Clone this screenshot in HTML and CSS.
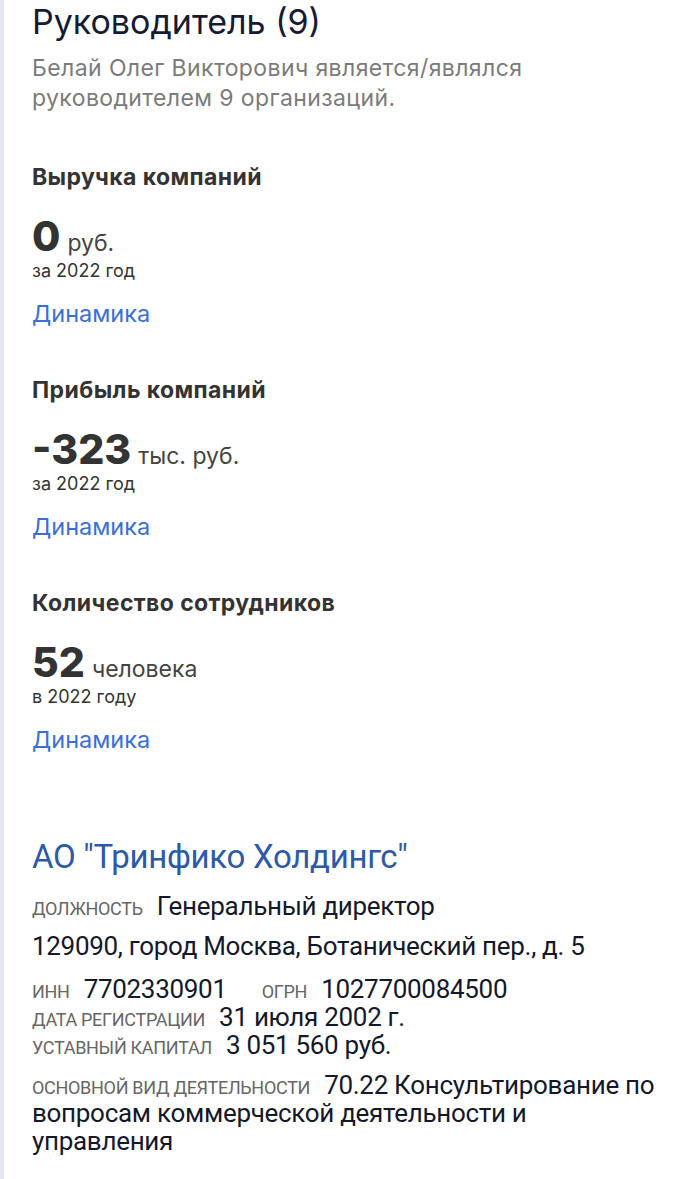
FILE: index.html
```html
<!DOCTYPE html>
<html lang="ru">
<head>
<meta charset="utf-8">
<link rel="stylesheet" href="styles.css">
</head>
<body>
<div class="page">
  <h1 class="title">Руководитель (9)</h1>
  <p class="lead">Белай Олег Викторович является/являлся руководителем 9 организаций.</p>

  <section class="stat">
    <h2 class="stat-title">Выручка компаний</h2>
    <div class="stat-value"><span class="num">0</span><span class="unit">руб.</span></div>
    <div class="stat-period">за 2022 год</div>
    <a class="link" href="#">Динамика</a>
  </section>

  <section class="stat">
    <h2 class="stat-title">Прибыль компаний</h2>
    <div class="stat-value"><span class="num">-323</span><span class="unit">тыс. руб.</span></div>
    <div class="stat-period">за 2022 год</div>
    <a class="link" href="#">Динамика</a>
  </section>

  <section class="stat">
    <h2 class="stat-title">Количество сотрудников</h2>
    <div class="stat-value"><span class="num">52</span><span class="unit">человека</span></div>
    <div class="stat-period">в 2022 году</div>
    <a class="link" href="#">Динамика</a>
  </section>

  <section class="org">
    <a class="org-name" href="#">АО "Тринфико Холдингс"</a>
    <div class="row row-pos"><span class="label">должность</span><span class="val">Генеральный директор</span></div>
    <div class="row row-addr"><span class="val">129090, город Москва, Ботанический пер., д. 5</span></div>
    <div class="row-group">
      <div class="row"><span class="label">инн</span><span class="val">7702330901</span><span class="label gap">огрн</span><span class="val">1027700084500</span></div>
      <div class="row"><span class="label">дата регистрации</span><span class="val">31 июля 2002 г.</span></div>
      <div class="row"><span class="label">уставный капитал</span><span class="val">3 051 560 руб.</span></div>
    </div>
    <div class="row row-act"><span class="label">основной вид деятельности</span><span class="val">70.22 Консультирование по вопросам коммерческой деятельности и управления</span></div>
  </section>
</div>
</body>
</html>
```

FILE: styles.css
```css
html, body {
  margin: 0;
  padding: 0;
  background: #fff;
}
body {
  font-family: Inter, "Noto Sans", sans-serif;
}
.page {
  border-left: 4px solid #e3e6ea;
  padding: 2px 40px 0 28px;
  min-height: 1179px;
  box-sizing: border-box;
}
.title {
  margin: 0;
  font-size: 34px;
  line-height: 40px;
  font-weight: 400;
  color: #161a33;
}
.lead {
  margin: 11px 0 0;
  font-size: 23px;
  line-height: 30px;
  color: #7b7b7b;
  letter-spacing: 0.4px;
}
.stat {
  margin-top: 49px;
}
.stat + .stat {
  margin-top: 46px;
}
.stat-title {
  margin: 0;
  font-size: 23px;
  line-height: 30px;
  font-weight: 700;
  letter-spacing: 0.4px;
  color: #333;
}
.stat-value {
  display: flex;
  align-items: baseline;
  gap: 7px;
  height: 48px;
  margin-top: 20px;
  color: #333;
}
.num {
  font-size: 41px;
  line-height: 48px;
  font-weight: 800;
}
.unit {
  font-size: 23px;
  line-height: 30px;
  color: #444;
}
.stat-period {
  font-size: 18px;
  line-height: 22px;
  color: #333;
}
.link {
  display: inline-block;
  margin-top: 17px;
  font-size: 23.5px;
  line-height: 30px;
  color: #3a6fd8;
  text-decoration: none;
}
.org {
  margin-top: 82px;
  font-family: Roboto, "Liberation Sans", sans-serif;
}
.org-name {
  display: block;
  font-size: 33px;
  line-height: 40px;
  color: #2c5aa8;
  text-decoration: none;
  letter-spacing: -0.3px;
}
.row {
  font-size: 26px;
  line-height: 28px;
  color: #14182b;
}
.row-pos {
  margin-top: 14px;
  line-height: 30px;
}
.row-addr {
  margin-top: 10px;
  line-height: 30px;
}
.row-group {
  margin-top: 14px;
}
.row-act {
  margin-top: 12px;
}
.label {
  font-size: 18px;
  line-height: 1;
  text-transform: uppercase;
  color: #666;
  letter-spacing: -0.3px;
  margin-right: 14px;
}
.label.gap {
  margin-left: 35px;
}
.val {
  letter-spacing: -0.3px;
}
```
